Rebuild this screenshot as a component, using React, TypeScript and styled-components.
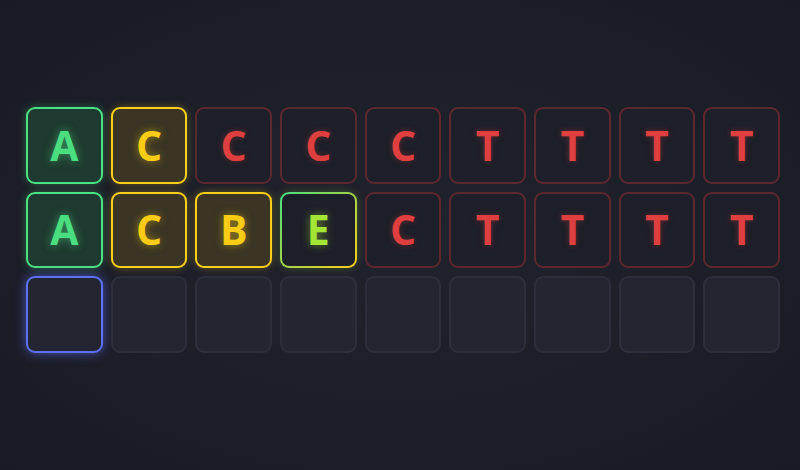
import React from "react";
import styled, { createGlobalStyle, css } from "styled-components";

type Status = "correct" | "present" | "partial" | "absent" | "empty" | "active";

const GlobalStyle = createGlobalStyle`
  html, body {
    margin: 0;
    padding: 0;
    background: #1c1e28;
  }
`;

const Page = styled.div`
  width: 800px;
  height: 470px;
  box-sizing: border-box;
  padding: 107px 20px 0 26px;
  background: radial-gradient(ellipse at 50% 50%, #20222d 0%, #1c1e28 60%, #191a23 100%);
  font-family: "Open Sans", "Noto Sans", sans-serif;
  overflow: hidden;
`;

const Board = styled.div`
  display: grid;
  grid-template-columns: repeat(9, 1fr);
  grid-auto-rows: 76.67px;
  gap: 8px;
  width: 754px;
`;

const tileStyles: Record<Status, ReturnType<typeof css>> = {
  correct: css`
    background: #1f3a30;
    border: 2.5px solid #4be283;
    color: #4ade80;
    box-shadow: 0 0 9px rgba(74, 222, 128, 0.35);
    text-shadow: 0 0 8px rgba(74, 222, 128, 0.55);
  `,
  present: css`
    background: #3a3524;
    border: 2.5px solid #fccf18;
    color: #facc15;
    box-shadow: 0 0 9px rgba(250, 204, 21, 0.3);
    text-shadow: 0 0 8px rgba(250, 204, 21, 0.5);
  `,
  partial: css`
    background:
      linear-gradient(#1d1f29, #1d1f29) padding-box,
      linear-gradient(135deg, #4ade80, #facc15) border-box;
    border: 2.5px solid transparent;
    color: #a3e635;
    box-shadow: 0 0 9px rgba(163, 230, 53, 0.25);
    text-shadow: 0 0 8px rgba(163, 230, 53, 0.5);
  `,
  absent: css`
    background: #1d1f29;
    border: 2.5px solid #5e272e;
    color: #df3f3f;
    text-shadow: 0 0 6px rgba(220, 62, 62, 0.35);
  `,
  empty: css`
    background: #232631;
    border: 2.5px solid #2c2f3b;
  `,
  active: css`
    background: #232631;
    border: 2.5px solid #5e6ff5;
    box-shadow: 0 0 12px rgba(92, 108, 242, 0.65);
  `,
};

const Tile = styled.div<{ $status: Status }>`
  box-sizing: border-box;
  display: flex;
  align-items: center;
  justify-content: center;
  border-radius: 9px;
  font-size: 41px;
  font-weight: 700;
  line-height: 1;
  ${(p) => tileStyles[p.$status]}
`;

const rows: [string, Status][][] = [
  [
    ["A", "correct"],
    ["C", "present"],
    ["C", "absent"],
    ["C", "absent"],
    ["C", "absent"],
    ["T", "absent"],
    ["T", "absent"],
    ["T", "absent"],
    ["T", "absent"],
  ],
  [
    ["A", "correct"],
    ["C", "present"],
    ["B", "present"],
    ["E", "partial"],
    ["C", "absent"],
    ["T", "absent"],
    ["T", "absent"],
    ["T", "absent"],
    ["T", "absent"],
  ],
  [
    ["", "active"],
    ["", "empty"],
    ["", "empty"],
    ["", "empty"],
    ["", "empty"],
    ["", "empty"],
    ["", "empty"],
    ["", "empty"],
    ["", "empty"],
  ],
];

const App: React.FC = () => {
  return (
    <>
      <GlobalStyle />
      <Page>
        <Board>
          {rows.map((row, r) =>
            row.map(([letter, status], c) => (
              <Tile key={`${r}-${c}`} $status={status}>
                {letter}
              </Tile>
            ))
          )}
        </Board>
      </Page>
    </>
  );
};

export default App;
